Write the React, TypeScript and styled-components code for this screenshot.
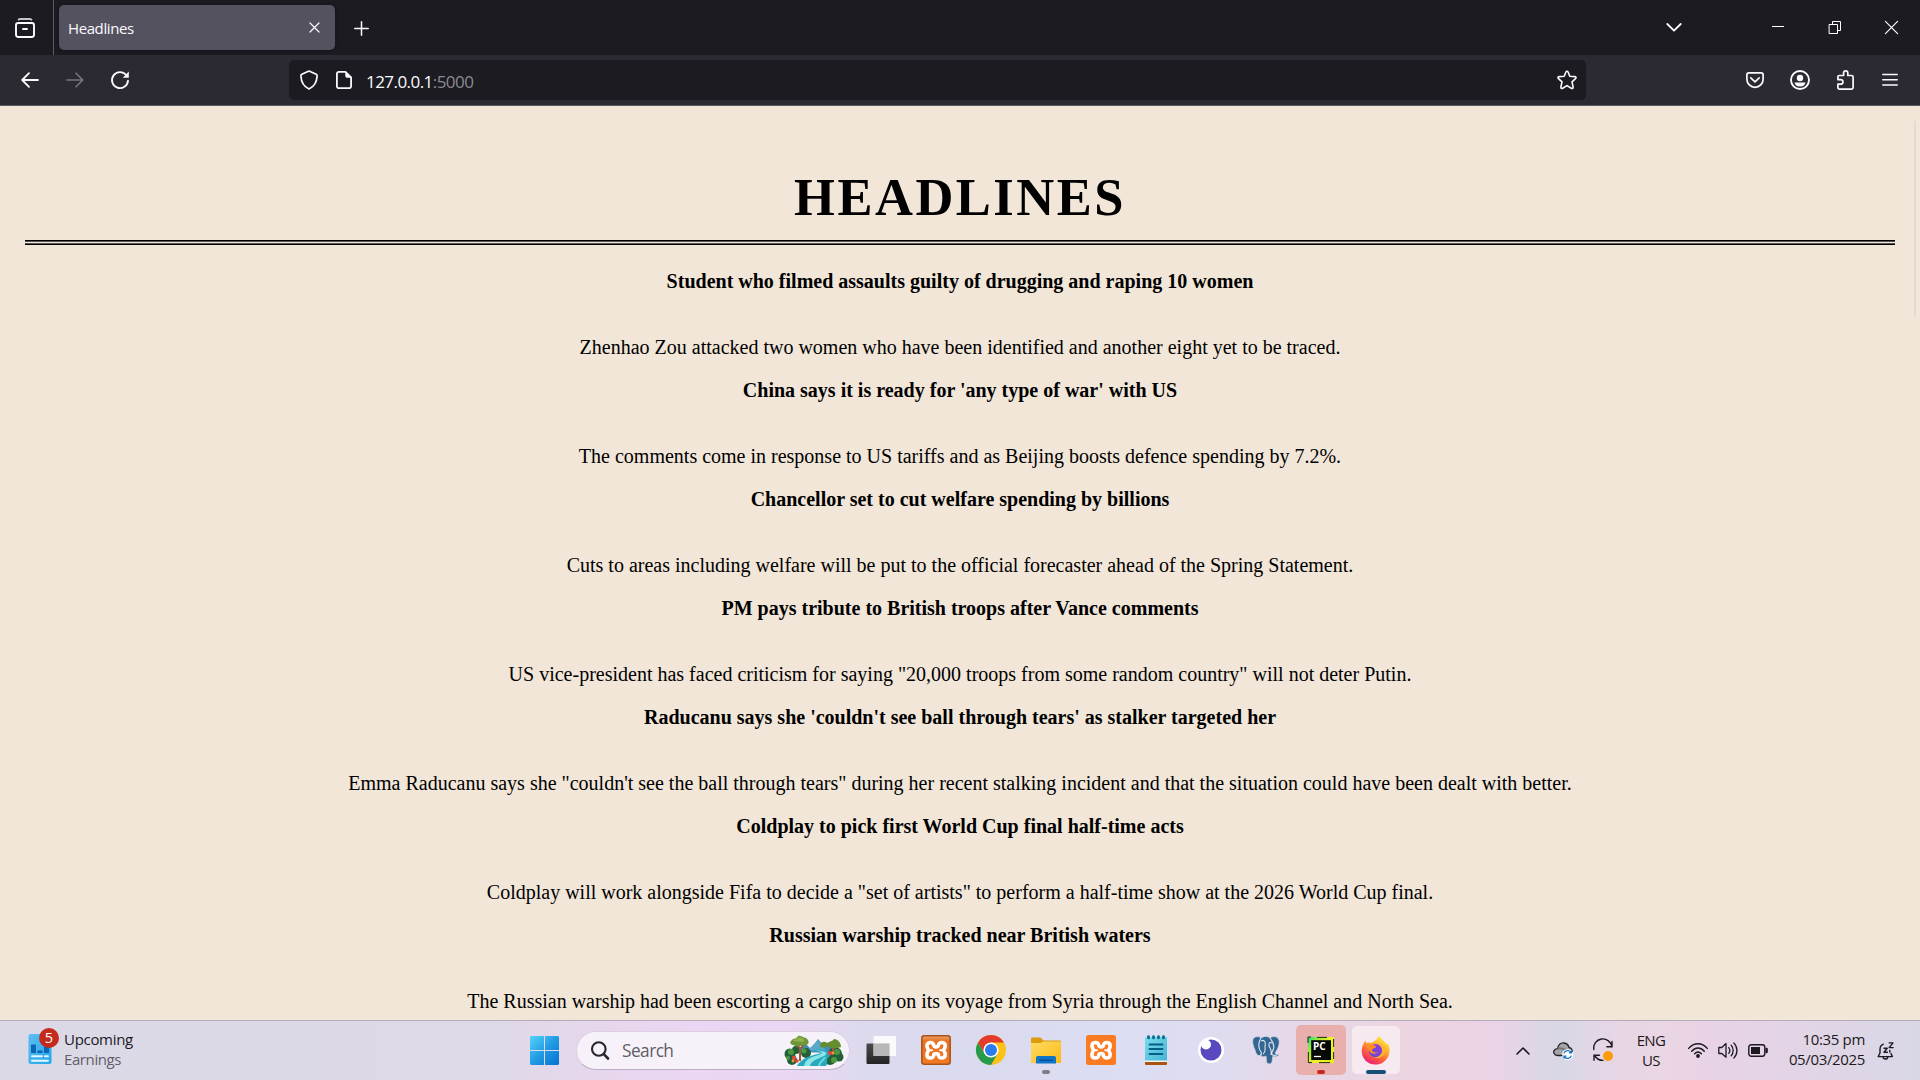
import React from "react";
import styled, { createGlobalStyle } from "styled-components";

const Global = createGlobalStyle`
  * { box-sizing: border-box; }
  html, body { margin: 0; padding: 0; background: #f2e6d8; overflow: hidden; }
`;

const ui = `"Open Sans", "Noto Sans", sans-serif`;

const Screen = styled.div`
  width: 1920px;
  height: 1080px;
  display: flex;
  flex-direction: column;
  overflow: hidden;
  font-family: ${ui};
`;

const Svg = styled.svg`
  display: block;
  flex: none;
  overflow: visible;
`;

type IconProps = { w: number; h?: number; sw?: number; color?: string; children: React.ReactNode };
const Icon = ({ w, h = w, sw = 1.6, color = "#fbfbfe", children }: IconProps) => (
  <Svg width={w} height={h} viewBox={`0 0 ${w} ${h}`} fill="none" stroke={color} strokeWidth={sw} strokeLinecap="round" strokeLinejoin="round">
    {children}
  </Svg>
);

/* Browser chrome */
const TabStrip = styled.div`
  height: 55px;
  flex: none;
  display: flex;
  align-items: center;
  background: #1c1b22;
`;
const ViewButton = styled.div`
  width: 54px;
  height: 55px;
  padding: 18px 0 0 15px;
  border-right: 1px solid #5b5a63;
`;
const Tab = styled.div`
  width: 276px;
  height: 45px;
  margin: 0 19px 0 5px;
  padding: 0 15px 0 9px;
  display: flex;
  align-items: center;
  justify-content: space-between;
  border-radius: 5px;
  background: #53525e;
  box-shadow: 0 0 4px rgba(0, 0, 0, 0.4);
`;
const TabTitle = styled.span`
  font-size: 15px;
  line-height: 20px;
  letter-spacing: -0.4px;
  color: #fbfbfe;
  padding-top: 1px;
`;
const WindowControls = styled.div`
  margin-left: auto;
  padding-right: 22px;
  display: flex;
  align-items: center;
`;
const ControlSlot = styled.div<{ $before: number }>`
  margin-left: ${(p) => p.$before}px;
`;
const Toolbar = styled.div`
  height: 51px;
  flex: none;
  display: flex;
  align-items: center;
  background: #2b2a33;
  border-bottom: 1px solid #5a5963;
`;
const NavButtons = styled.div`
  width: 289px;
  padding-left: 21px;
  display: flex;
  gap: 27px;
`;
const UrlBar = styled.div`
  width: 1297px;
  height: 40px;
  padding: 0 9px 0 11px;
  display: flex;
  align-items: center;
  border-radius: 5px;
  background: #1c1b22;
`;
const UrlText = styled.div`
  margin-left: 14px;
  flex: 1;
  padding-top: 3px;
  font-size: 17px;
  line-height: 22px;
  letter-spacing: -0.55px;
  color: #fbfbfe;
`;
const Port = styled.span`
  color: #8b8a91;
`;
const PageIcon = styled.div`
  margin-left: 18px;
`;
const ToolbarActions = styled.div`
  margin-left: auto;
  padding-right: 22px;
  display: flex;
  align-items: center;
`;

/* Page */
const Page = styled.main`
  position: relative;
  height: 914px;
  flex: none;
  overflow: hidden;
  padding: 0 25px;
  background: #f2e6d8;
  color: #000;
  font-family: "Liberation Serif", "Times New Roman", serif;
  text-align: center;
`;
const Title = styled.h1`
  margin: 0;
  padding-top: 61px;
  height: 134px;
  font-size: 52.5px;
  line-height: 60px;
  font-weight: 700;
  letter-spacing: 2.5px;
`;
const Rule = styled.div`
  height: 5px;
  background: linear-gradient(#000 0 1px, #5b5650 1px 2px, #f2e6d8 2px 3px, #5b5650 3px 4px, #000 4px);
`;
const Stories = styled.div`
  padding-top: 25px;
`;
const Story = styled.article`
  height: 109px;
  font-size: 20px;
  line-height: 23px;
  white-space: nowrap;
`;
const Headline = styled.h2`
  margin: 0 0 43px;
  font-size: 20px;
  line-height: 23px;
  font-weight: 700;
`;
const Summary = styled.p`
  margin: 0;
`;
const ScrollThumb = styled.div`
  position: absolute;
  right: 4px;
  top: 15px;
  width: 2px;
  height: 196px;
  background: #e5dacf;
`;

/* Taskbar */
const Taskbar = styled.footer`
  height: 60px;
  flex: none;
  display: flex;
  align-items: stretch;
  border-top: 1px solid #b4acb9;
  background: linear-gradient(90deg, #dcd9e7 0, #ddd9e7 480px, #e6d7ec 590px, #ebd6f3 690px, #e9d7f3 790px, #dcdaed 870px, #dadaee 950px, #dcdef3 1130px, #dfdcf0 1220px, #e5d8e9 1290px, #ecd5e1 1400px, #ecd3e5 1480px, #d9d7e5 1560px, #e8d6e5 1620px, #ead5e3 1670px, #e8d2e6 1710px, #e1d5e6 1810px, #d9d7e6 1920px);
`;
const Widget = styled.div`
  width: 517px;
  padding-left: 28px;
  display: flex;
`;
const WidgetArt = styled.div`
  position: relative;
  width: 36px;
  padding-top: 13px;
`;
const Badge = styled.div`
  position: absolute;
  left: 11px;
  top: 7px;
  width: 20px;
  height: 20px;
  border-radius: 50%;
  background: #c42b1c;
  color: #fff;
  font-size: 14.5px;
  line-height: 19px;
  text-align: center;
`;
const WidgetText = styled.div`
  padding-top: 8px;
  font-size: 15px;
  line-height: 20px;
  letter-spacing: -0.3px;
  color: #1b1a1f;
`;
const Muted = styled.div`
  letter-spacing: -0.4px;
  color: #605e68;
`;
const Slot = styled.div<{ $bar?: string; $barWidth?: number }>`
  position: relative;
  width: 55px;
  display: flex;
  align-items: center;
  justify-content: center;
  padding-bottom: 1px;
  &::after {
    content: "";
    position: absolute;
    bottom: 6px;
    left: 50%;
    width: ${(p) => p.$barWidth ?? 0}px;
    height: 4px;
    margin-left: -${(p) => (p.$barWidth ?? 0) / 2}px;
    border-radius: 2px;
    background: ${(p) => p.$bar ?? "transparent"};
  }
`;
const Tile = styled.div<{ $bg: string; $size: number }>`
  width: ${(p) => p.$size}px;
  height: ${(p) => p.$size}px;
  display: flex;
  align-items: center;
  justify-content: center;
  border-radius: 5px;
  background: ${(p) => p.$bg};
`;
const SearchBox = styled.div`
  width: 274px;
  height: 39px;
  margin: 10px 3px 0 4px;
  padding: 0 5px 0 14px;
  display: flex;
  align-items: center;
  border-radius: 20px;
  background: #f7f2f9;
  border: 1px solid #dccfe0;
  border-bottom-color: #bcafc3;
`;
const SearchLabel = styled.span`
  flex: 1;
  margin-left: 13px;
  font-size: 17.3px;
  line-height: 22px;
  letter-spacing: -0.55px;
  padding-top: 1px;
  color: #605d64;
`;
const Tray = styled.div`
  margin-left: auto;
  padding-right: 19px;
  display: flex;
`;
const TraySlot = styled.div<{ $w: number }>`
  width: ${(p) => p.$w}px;
  display: flex;
  align-items: center;
  justify-content: center;
`;
const TrayText = styled.div<{ $w: number; $align: string; $ls: number; $top: number }>`
  width: ${(p) => p.$w}px;
  padding-top: ${(p) => p.$top}px;
  font-size: 15px;
  line-height: 20px;
  letter-spacing: ${(p) => p.$ls}px;
  text-align: ${(p) => p.$align};
  color: #1c1a20;
  white-space: nowrap;
`;

const stories = [
  ["Student who filmed assaults guilty of drugging and raping 10 women", "Zhenhao Zou attacked two women who have been identified and another eight yet to be traced."],
  ["China says it is ready for 'any type of war' with US", "The comments come in response to US tariffs and as Beijing boosts defence spending by 7.2%."],
  ["Chancellor set to cut welfare spending by billions", "Cuts to areas including welfare will be put to the official forecaster ahead of the Spring Statement."],
  ["PM pays tribute to British troops after Vance comments", "US vice-president has faced criticism for saying \"20,000 troops from some random country\" will not deter Putin."],
  ["Raducanu says she 'couldn't see ball through tears' as stalker targeted her", "Emma Raducanu says she \"couldn't see the ball through tears\" during her recent stalking incident and that the situation could have been dealt with better."],
  ["Coldplay to pick first World Cup final half-time acts", "Coldplay will work alongside Fifa to decide a \"set of artists\" to perform a half-time show at the 2026 World Cup final."],
  ["Russian warship tracked near British waters", "The Russian warship had been escorting a cargo ship on its voyage from Syria through the English Channel and North Sea."],
];

const Xampp = ({ glossy }: { glossy?: boolean }) => (
  <Svg width="30" height="30" viewBox="0 0 30 30">
    <defs>
      <linearGradient id="xg" x1="0" y1="0" x2="0" y2="1">
        <stop offset="0" stopColor="#f0a06a" /><stop offset="0.2" stopColor="#e8701f" /><stop offset="1" stopColor="#f27a24" />
      </linearGradient>
    </defs>
    <rect x={glossy ? 0.8 : 0} y={glossy ? 0.8 : 0} width={glossy ? 28.4 : 30} height={glossy ? 28.4 : 30} rx="2.5" fill={glossy ? "url(#xg)" : "#fb7a24"} stroke={glossy ? "#a8521c" : "none"} strokeWidth="1.5" />
    <path
      d="M12.8 10.4C12.6 6.4 5.9 6.6 6 11C6 13 7.2 13.8 7.4 15.2C7.2 16.6 6 17.4 6 19.4C5.9 24 12.6 24 12.8 20C13 18.2 17.2 18.2 17.4 20C17.6 24 24.3 24 24.2 19.4C24.2 17.4 23 16.6 22.8 15.2C23 13.8 24.2 13 24.2 11C24.3 6.6 17.6 6.4 17.4 10.4C17.2 12.4 13 12.4 12.8 10.4Z"
      fill="none" stroke="#fff" strokeWidth="3.6" strokeLinejoin="round"
    />
    <path d="M8.5 15.2H11M19.2 15.2H21.7" stroke="#fff" strokeWidth="2" strokeLinecap="round" />
  </Svg>
);

const Landscape = () => (
  <Svg width="60" height="32" viewBox="0 0 60 32">
    <path d="M12 17L22 9L27 14L34 4L40 11L46 7L55 18Z" fill="#3b8fb8" />
    <path d="M24 15L34 5L43 17Z" fill="#5aa9cc" />
    <g fill="#23603a">
      <circle cx="6" cy="19" r="5.5" /><circle cx="12" cy="15" r="4" /><circle cx="8" cy="25" r="5" /><circle cx="22" cy="18" r="5" />
      <circle cx="51" cy="19" r="7" /><circle cx="46" cy="24" r="6" /><circle cx="55" cy="22" r="4.5" />
    </g>
    <g fill="#4c9a3f">
      <circle cx="7" cy="17" r="3" /><circle cx="20" cy="16" r="2.5" /><circle cx="53" cy="17" r="3" /><circle cx="50" cy="25" r="3" /><circle cx="4" cy="23" r="2" />
    </g>
    <path d="M29 14C37 15 40 17 34 19C24 21 16 25 13 31L42 31C45 27 41 25 45 22C49 18 43 14 29 14Z" fill="#27a8bd" />
    <path d="M31 15C42 17 38 19 31 21C22 24 21 27 20 31H26C27 26 33 24 40 21C45 18 42 16 31 15Z" fill="#8be4e8" />
    <path d="M35 31C35 27 40 25 41 22" stroke="#6bd8df" fill="none" strokeWidth="2" />
    <path d="M16 26L16 13L11 9M16 14L21 9M49 20V13L45 10M49 14L53 10" stroke="#9b5b3b" strokeWidth="2" fill="none" />
    <path d="M6 8C8 2 12 5 14 1C17 0 19 3 22 3C25 5 25 8 24 9C19 12 9 12 6 8Z" fill="#6f9637" />
    <path d="M9 6C12 3 15 4 16 2C20 3 21 6 19 7Z" fill="#91b34b" />
    <path d="M36 10C37 6 41 6 43 8L42 12C39 13 36 13 36 10ZM42 10C43 6 48 7 50 4C54 4 57 8 57 12C52 14 45 14 42 10Z" fill="#648d30" />
    <g fill="#df493f"><circle cx="10" cy="23" r="2.2" /><circle cx="13" cy="26" r="1.8" /><circle cx="46" cy="18" r="2.2" /></g>
    <g fill="#f29a37"><circle cx="9" cy="26" r="1.4" /><circle cx="49" cy="18" r="1.3" /></g>
  </Svg>
);

const Firefox = () => (
  <Svg width="29" height="30" viewBox="0 0 29 30">
    <defs>
      <linearGradient id="ff" x1="0.8" y1="0" x2="0.25" y2="1">
        <stop offset="0" stopColor="#fff04a" /><stop offset="0.35" stopColor="#ffb52c" /><stop offset="0.65" stopColor="#ff643a" /><stop offset="1" stopColor="#e8177b" />
      </linearGradient>
      <linearGradient id="fp" x1="0" y1="1" x2="1" y2="0"><stop offset="0" stopColor="#5a55d4" /><stop offset="1" stopColor="#9c35dd" /></linearGradient>
    </defs>
    <path d="M18 1C20 4 24 6 26 10C26.4 9 26.4 8 26.2 7C29.6 13 29 18 27 22C24 27 20 29.5 14.5 29.5C6 29.5 .7 23 .7 16C.7 12 2 9 4.6 5.5C4.8 7 5 7.5 5.6 8.2C7 7 8.7 7.5 10 7.8C12 7.3 16 5 18 1Z" fill="url(#ff)" />
    <circle cx="14.5" cy="15.7" r="6.6" fill="url(#fp)" />
    <path d="M5 11C8 9 10 10 12 10C14 10 15 11 15 12C14 14 11 13 11 15C11 17 14 18 17 17C14 20 9 19 8 15C7 14 6 13 5 11Z" fill="#ff8b2b" />
    <path d="M16 8.5C20 9 22.5 13 21 17C20 21 16 23 12 22C19 25 25 20 24.5 14C24 10 20 8 16 8.5Z" fill="#ffb52f" />
  </Svg>
);

const Chrome = () => (
  <Svg width="30" height="30" viewBox="0 0 30 30">
    <circle cx="15" cy="15" r="15" fill="#fbc116" />
    <path d="M15 15L15 7.5H28A15 15 0 0 0 2 7.5L8.5 18.8Z" fill="#e33b2e" />
    <path d="M2 7.5A15 15 0 0 0 15 30L21.5 18.8L15 15L8.5 18.8Z" fill="#259b4b" />
    <circle cx="15" cy="15" r="7.6" fill="#fff" /><circle cx="15" cy="15" r="6" fill="#2a7bee" />
  </Svg>
);

const Elephant = () => (
  <Svg width="28" height="28" viewBox="0 0 28 28">
    <path d="M1 3C3 0 7 0 9 2C12 0 16 0 18 2C22-1 26 1 27 4C28 8 26 13 23 17C24 19 27 18 27 19C25 21 22 21 21 20L20 26C19 29 15 28 14.5 26L14 20C11 22 9 20 9 19C6 21 4 18 3 14C1 10 0 6 1 3Z" fill="#336791" stroke="#cfd9e8" strokeWidth=".8" />
    <path d="M9 2C6 6 6 12 9 16C10 18 9 19 8 19M9 5C12 3 14 6 13 10C13 14 14 16 11 18M18 2C22 7 23 12 20 16C19 19 21 20 25 19M20 7C17 5 16 9 18 12C20 15 19 17 19 19" stroke="#dfe5ef" strokeWidth="1.1" fill="none" />
  </Svg>
);

export default function App() {
  return (
    <Screen>
      <Global />
      <TabStrip>
        <ViewButton>
          <Icon w={20} sw={1.9}>
            <path d="M3.6 1.7C4.2 1.1 4.8 1 5.5 1H14.5C15.2 1 15.8 1.1 16.4 1.7" stroke="#c4c4c9" />
            <rect x="1" y="5" width="18" height="14" rx="2.2" /><path d="M8 11H12" />
          </Icon>
        </ViewButton>
        <Tab>
          <TabTitle>Headlines</TabTitle>
          <Icon w={11} sw={1.2}><path d="M1 1L10 10M10 1L1 10" /></Icon>
        </Tab>
        <Icon w={15} sw={1.5}><path d="M7.5 1.8V15.2M.8 8.5H14.2" /></Icon>
        <WindowControls>
          <ControlSlot $before={0}><Icon w={16} h={9} sw={1.8}><path d="M1.3 1L8 7.7L14.7 1" /></Icon></ControlSlot>
          <ControlSlot $before={90}><Icon w={12} h={4} sw={1}><path d="M0 .5H12" strokeLinecap="butt" stroke="#fff" /></Icon></ControlSlot>
          <ControlSlot $before={45}><Icon w={12} h={13} sw={1}><path d="M.5 3.5H8.5V12.5H.5ZM3.5 3.5V.5H11.5V9.5H8.5" strokeLinejoin="miter" stroke="#fff" /></Icon></ControlSlot>
          <ControlSlot $before={44}><Icon w={13} sw={1.2}><path d="M.4 .4L12.6 12.6M12.6 .4L.4 12.6" /></Icon></ControlSlot>
        </WindowControls>
      </TabStrip>

      <Toolbar>
        <NavButtons>
          <Icon w={18} sw={1.8}><path d="M17 9H1.2M8 2.2L1.2 9L8 15.8" /></Icon>
          <Icon w={18} sw={1.6} color="#77767e"><path d="M1 9H16.8M10 2.2L16.8 9L10 15.8" /></Icon>
          <Icon w={18} sw={1.8}>
            <path d="M15.4 4.3A8 8 0 1 0 17 9.6" /><path d="M17.8 .6V6.8H11.8Z" fill="#fbfbfe" stroke="none" />
          </Icon>
        </NavButtons>
        <UrlBar>
          <Icon w={18} h={20} sw={1.7}><path d="M9 1L16.2 4.2C17 4.6 17.2 5 17.1 6C16.8 12 14.5 16.5 9 19C3.5 16.5 1.2 12 .9 6C.8 5 1 4.6 1.8 4.2Z" /></Icon>
          <PageIcon>
            <Icon w={16} h={18} sw={1.8}><path d="M9.5 .9H3A2 2 0 0 0 .9 3V15A2 2 0 0 0 3 17.1H13A2 2 0 0 0 15.1 15V6.5Z" /><path d="M9.3 .9V5A1.7 1.7 0 0 0 11 6.7H15.1Z" fill="#fbfbfe" stroke="none" /></Icon>
          </PageIcon>
          <UrlText>127.0.0.1<Port>:5000</Port></UrlText>
          <Icon w={20} sw={1.6}><path d="M8.9 2C9.3 .9 10.7 .9 11.1 2L12.8 6.2L17.9 6.6C19.2 6.8 19.4 7.9 18.5 8.7L15 11.9L16.1 17C16.3 18.3 15.3 18.9 14.3 18.3L10 15.6L5.7 18.3C4.7 18.9 3.7 18.3 3.9 17L5 11.9L1.5 8.7C.6 7.9 .8 6.8 2.1 6.6L7.2 6.2Z" /></Icon>
        </UrlBar>
        <ToolbarActions>
          <ControlSlot $before={0}><Icon w={18} h={16} sw={1.7}><path d="M2.8 .9H15.2A1.9 1.9 0 0 1 17.1 2.8V7.2A8.1 8.1 0 0 1 .9 7.2V2.8A1.9 1.9 0 0 1 2.8 .9ZM4.8 5.8L9 9.8L13.2 5.8" /></Icon></ControlSlot>
          <ControlSlot $before={26}><Icon w={20} sw={1.9}><circle cx="10" cy="10" r="9" /><circle cx="10" cy="8" r="3.2" fill="#fbfbfe" stroke="none" /><path d="M4.5 12.6H15.5C15 15 13 16.6 10 16.6C7 16.6 5 15 4.5 12.6Z" fill="#fbfbfe" stroke="none" /></Icon></ControlSlot>
          <ControlSlot $before={27}><Icon w={17} h={20} sw={1.7}><path d="M6.6 5.5V3A2.1 2.1 0 0 1 10.8 3V5.5H14.5A1.6 1.6 0 0 1 16.1 7.1V17.5A1.6 1.6 0 0 1 14.5 19.1H2.5A1.6 1.6 0 0 1 .9 17.5V14.2H3.6A2.3 2.3 0 0 0 3.6 9.6H.9V7.1A1.6 1.6 0 0 1 2.5 5.5Z" /></Icon></ControlSlot>
          <ControlSlot $before={28}><Icon w={16} h={15} sw={1.5}><path d="M.8 1.6H15.2M.8 6.8H15.2M.8 12H15.2" /></Icon></ControlSlot>
        </ToolbarActions>
      </Toolbar>

      <Page>
        <Title>HEADLINES</Title>
        <Rule />
        <Stories>
          {stories.map(([headline, summary]) => (
            <Story key={headline}>
              <Headline>{headline}</Headline>
              <Summary>{summary}</Summary>
            </Story>
          ))}
        </Stories>
        <ScrollThumb />
      </Page>

      <Taskbar>
        <Widget>
          <WidgetArt>
            <Svg width="24" height="30" viewBox="0 0 24 30">
              <defs><linearGradient id="wg" x1="0" y1="0" x2="1" y2="1"><stop offset="0" stopColor="#5fbcf2" /><stop offset="1" stopColor="#21a8ea" /></linearGradient></defs>
              <rect x=".5" width="23" height="30" rx="2" fill="url(#wg)" />
              <path d="M3 11.5A1 1 0 0 1 4 10.5H7A1 1 0 0 1 8 11.5V19H3ZM9.5 16.5H14.5V19H9.5ZM16 12H21V19H16Z" fill="#0b66b5" />
              <path d="M4 22.3H14M17 22.3H20M4 26.7H20" stroke="#e4f7ff" strokeWidth="2" strokeLinecap="round" />
            </Svg>
            <Badge>5</Badge>
          </WidgetArt>
          <WidgetText>Upcoming<Muted>Earnings</Muted></WidgetText>
        </Widget>

        <Slot>
          <Svg width="29" height="29" viewBox="0 0 29 29">
            <defs><linearGradient id="win" gradientUnits="userSpaceOnUse" x1="0" y1="0" x2="29" y2="29"><stop offset="0" stopColor="#54d3fb" /><stop offset=".5" stopColor="#219be4" /><stop offset="1" stopColor="#0671d0" /></linearGradient></defs>
            <path d="M1 0H14V14H0V1ZM15 0H28L29 1V14H15ZM0 15H14V29H1L0 28ZM15 15H29V28L28 29H15Z" fill="url(#win)" />
          </Svg>
        </Slot>
        <SearchBox>
          <Icon w={18} h={19} sw={2.1} color="#29262c"><circle cx="7.8" cy="8" r="6.8" /><path d="M12.8 13.2L17 17.5" strokeWidth="2.6" /></Icon>
          <SearchLabel>Search</SearchLabel>
          <Landscape />
        </SearchBox>

        <Slot>
          <Svg width="30" height="28" viewBox="0 0 30 28">
            <defs><linearGradient id="tv" x1="0" y1="0" x2="0" y2="1"><stop offset="0" stopColor="#4b4b4b" /><stop offset="1" stopColor="#242424" /></linearGradient></defs>
            <rect x=".5" y="7.5" width="23" height="20.5" rx="1" fill="url(#tv)" /><rect x="7.5" y="0" width="22.5" height="20" rx="1" fill="#fff" fillOpacity=".85" />
            <rect x="7.5" y="7.5" width="16" height="12.5" fill="#b8b8b8" />
          </Svg>
        </Slot>
        <Slot><Xampp glossy /></Slot>
        <Slot><Chrome /></Slot>
        <Slot $bar="#7f7d88" $barWidth={8}>
          <Svg width="30" height="27" viewBox="0 0 30 27">
            <defs><linearGradient id="fo" x1="0" y1="0" x2="1" y2="1"><stop offset="0" stopColor="#ffdc62" /><stop offset="1" stopColor="#fcb916" /></linearGradient></defs>
            <path d="M0 1.5A1 1 0 0 1 1 .5H9.5L12.5 3.5H29A1 1 0 0 1 30 4.5V10H0Z" fill="#dd9b0b" />
            <path d="M0 6H9.5L12.5 4.5H30V26H0Z" fill="url(#fo)" />
            <path d="M5 26.5V21A2 2 0 0 1 7 19H23A2 2 0 0 1 25 21V26.5Z" fill="#1175c6" /><path d="M8.5 23.2H21.5" stroke="#084a91" strokeWidth="1.3" />
          </Svg>
        </Slot>
        <Slot><Xampp /></Slot>
        <Slot>
          <Svg width="22" height="30" viewBox="0 0 22 30">
            <defs><linearGradient id="np" x1="0" y1="0" x2="1" y2="1"><stop offset="0" stopColor="#7bdcec" /><stop offset="1" stopColor="#44b4d6" /></linearGradient></defs>
            <rect y="2" width="22" height="25" rx="1.3" fill="url(#np)" /><path d="M0 25.5H22V27H0Z" fill="#f2f2f2" /><path d="M0 27H22V29A1 1 0 0 1 21 30H1A1 1 0 0 1 0 29Z" fill="#a8530f" />
            <path d="M4.5 9.5H17.5M4.5 14H17.5M4.5 19H17.5" stroke="#055f85" strokeWidth="1.8" strokeLinecap="round" />
            <path d="M3.5 1.5V3M8.5 1.5V3M13.5 1.5V3M18.5 1.5V3" stroke="#08698b" strokeWidth="2.7" strokeLinecap="round" />
          </Svg>
        </Slot>
        <Slot>
          <Svg width="26" height="26" viewBox="0 0 26 26"><circle cx="13" cy="13" r="13" fill="#fff" /><circle cx="13" cy="13" r="10.5" fill="#5849be" /><circle cx="8" cy="7.5" r="5" fill="#fff" /></Svg>
        </Slot>
        <Slot><Elephant /></Slot>
        <Slot $bar="#c42b1c" $barWidth={8}>
          <Tile $bg="#e8afac" $size={50}>
            <Svg width="26" height="26" viewBox="0 0 26 26">
              <defs><linearGradient id="pc" x1="0" y1="0" x2="1" y2=".7"><stop offset="0" stopColor="#22d88f" /><stop offset=".25" stopColor="#8fea3e" /><stop offset=".6" stopColor="#f0ee2a" /><stop offset="1" stopColor="#e4f01d" /></linearGradient></defs>
              <rect width="26" height="26" fill="url(#pc)" /><rect x="3.2" y="3.2" width="19.8" height="19.8" fill="#050805" />
              <path d="M0 6V0H3M9 .4H19M25.6 2V10M25.6 15V22M.4 15V25.6H4M11 25.6H22" fill="none" stroke="#10150c" strokeWidth=".9" />
              <text x="5" y="13.2" fontFamily="Open Sans, sans-serif" fontSize="10" fontWeight="700" fill="#fff">PC</text>
              <path d="M6 19.5H13" stroke="#fff" strokeWidth="1.3" />
            </Svg>
          </Tile>
        </Slot>
        <Slot $bar="#135078" $barWidth={20}><Tile $bg="#f6e9f0" $size={48}><Firefox /></Tile></Slot>

        <Tray>
          <TraySlot $w={40}><Icon w={14} h={8} sw={1.6} color="#1c1a20"><path d="M1 7L7 1L13 7" /></Icon></TraySlot>
          <TraySlot $w={40}>
            <Svg width="20" height="18" viewBox="0 0 20 18">
              <path d="M4.5 13.5C1 13.5-.5 9.5 2 7.5C3 6.6 4 6.6 4.6 6.5C5.5 2.5 8 .7 11 1C14 1.3 15.5 3.3 16 5.5C18.7 6 20 8.5 19 11L13 13.5Z" fill="#a5a5a7" stroke="#252428" strokeWidth="1.3" />
              <path d="M4.6 6.5C9 5 12 8 19 11" stroke="#77777a" strokeWidth="2.2" fill="none" />
              <circle cx="14.7" cy="12.5" r="5.5" fill="#fff" />
              <path d="M11 11.4A4 4 0 0 1 18 10.3M18.4 8.5V10.9H16M18.4 13.6A4 4 0 0 1 11.4 14.8M11 16.5V14.2H13.4" stroke="#1273c4" strokeWidth="1.3" fill="none" />
            </Svg>
          </TraySlot>
          <TraySlot $w={40}>
            <Icon w={20} sw={1.4} color="#1c1a20">
              <path d="M.8 8.5A9 9 0 0 1 18.8 5.5M19 .5V5.8H13.8M1 19.3V14.2H6.4M1.5 14.5C3.5 17.5 6 19.5 10 19.4" strokeLinejoin="miter" />
              <circle cx="15" cy="15" r="5" fill="#ff9a08" stroke="none" />
            </Icon>
          </TraySlot>
          <TrayText $w={56} $align="center" $ls={-0.6} $top={9}>ENG<br />US</TrayText>
          <TraySlot $w={4} />
          <TraySlot $w={30}>
            <Icon w={20} h={15} sw={1.4} color="#1c1a20">
              <path d="M.7 5.4C6-.9 14-.9 19.3 5.4M3.7 8.2C7.5 3.9 12.5 3.9 16.3 8.2M6.6 10.8C8.8 8.4 11.2 8.4 13.4 10.8" /><circle cx="10" cy="13" r="1.9" fill="#1c1a20" stroke="none" />
            </Icon>
          </TraySlot>
          <TraySlot $w={30}>
            <Icon w={20} h={17} sw={1.3} color="#1c1a20"><path d="M.8 5.5H3.8L8 1.6V15.2L3.8 11.5H.8ZM10.7 5.6C12 7.2 12 9.7 10.7 11.3M13.2 3.2C15.8 6 15.8 10.9 13.2 13.7M15.8 .9C20 5 20 12 15.8 16.1" /></Icon>
          </TraySlot>
          <TraySlot $w={30}>
            <Icon w={20} h={13} sw={1.4} color="#1c1a20"><rect x=".8" y=".8" width="16" height="11.4" rx="2.4" /><rect x="3" y="3" width="9" height="7" fill="#1c1a20" stroke="none" /><path d="M18.6 5V8" strokeWidth="2.4" /></Icon>
          </TraySlot>
          <TrayText $w={92} $align="right" $ls={-0.35} $top={8}>10:35 pm<br />05/03/2025</TrayText>
          <TraySlot $w={5} />
          <TraySlot $w={31}>
            <Icon w={18} h={18} sw={1.4} color="#1c1a20">
              <path d="M6.3 2.2C4 3.2 3 5 3 7.5V11L1.2 14.6H15.4L14 11.5M6 14.8C6.3 17.8 10.4 17.8 10.8 14.8M7 6.2H10.2L7 10.3H10.4M12.2 .9H16L12.2 5.6H16.2M12.8 8.5V10" />
            </Icon>
          </TraySlot>
        </Tray>
      </Taskbar>
    </Screen>
  );
}
